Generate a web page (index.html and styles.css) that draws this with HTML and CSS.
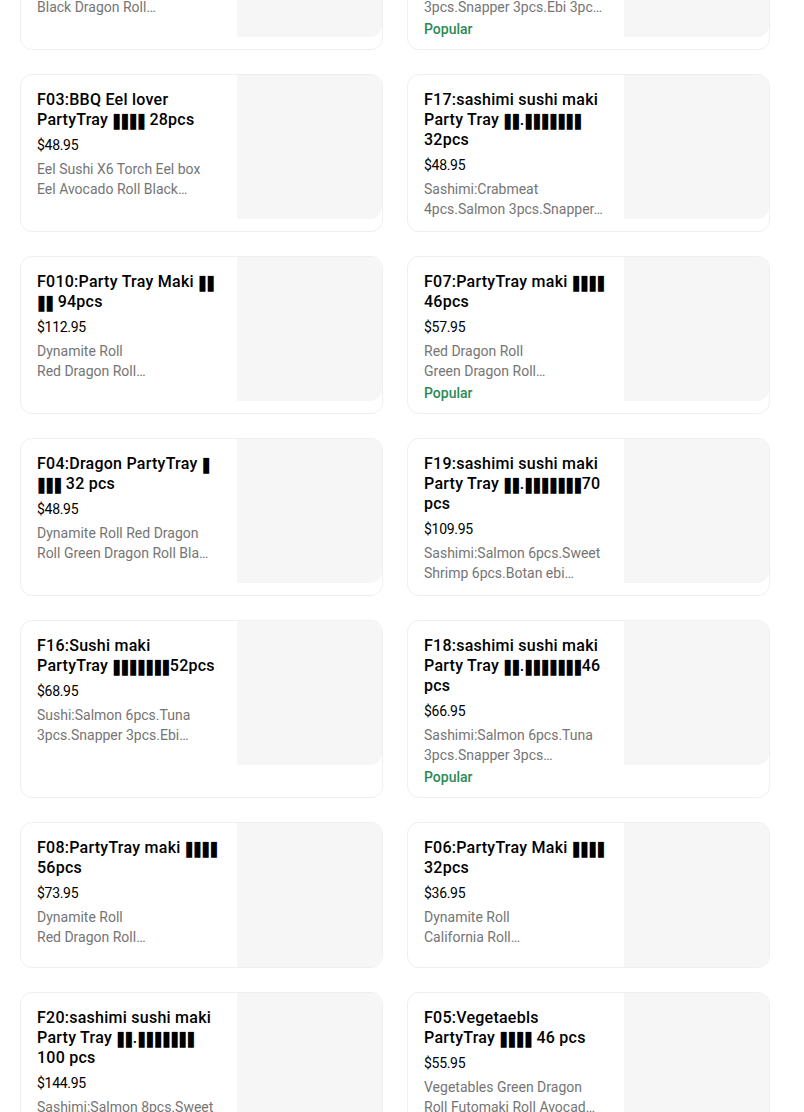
FILE: index.html
```html
<!DOCTYPE html>
<html lang="en">
<head>
<meta charset="utf-8">
<title>Party Trays</title>
<link rel="stylesheet" href="styles.css">
</head>
<body>
<main class="menu">
  <div class="card">
    <div class="info">
      <h3 class="title"><span class="ln">F02:Dragon lover PartyTray</span><span class="ln"><span class="tofu">▮▮▮▮</span> 40pcs</span></h3>
      <div class="price">$52.95</div>
      <p class="desc"><span class="ln">Red Dragon Roll Green Dragon</span><span class="ln">Black Dragon Roll…</span></p>
    </div>
    <div class="photo"></div>
  </div>
  <div class="card">
    <div class="info">
      <h3 class="title"><span class="ln">F15:Sushi PartyTray</span><span class="ln"><span class="tofu">▮▮▮▮▮▮▮</span>30pcs</span></h3>
      <div class="price">$45.95</div>
      <p class="desc"><span class="ln">Sushi:Salmon 6pcs.Tuna</span><span class="ln">3pcs.Snapper 3pcs.Ebi 3pc…</span></p>
      <div class="tag">Popular</div>
    </div>
    <div class="photo"></div>
  </div>

  <div class="card">
    <div class="info">
      <h3 class="title"><span class="ln">F03:BBQ Eel lover</span><span class="ln">PartyTray <span class="tofu">▮▮▮▮</span> 28pcs</span></h3>
      <div class="price">$48.95</div>
      <p class="desc"><span class="ln">Eel Sushi X6 Torch Eel box</span><span class="ln">Eel Avocado Roll Black…</span></p>
    </div>
    <div class="photo"></div>
  </div>
  <div class="card">
    <div class="info">
      <h3 class="title"><span class="ln">F17:sashimi sushi maki</span><span class="ln">Party Tray <span class="tofu">▮▮</span>.<span class="tofu">▮▮▮▮▮▮▮</span></span><span class="ln">32pcs</span></h3>
      <div class="price">$48.95</div>
      <p class="desc"><span class="ln">Sashimi:Crabmeat</span><span class="ln">4pcs.Salmon 3pcs.Snapper…</span></p>
    </div>
    <div class="photo"></div>
  </div>

  <div class="card">
    <div class="info">
      <h3 class="title"><span class="ln">F010:Party Tray Maki <span class="tofu">▮▮</span></span><span class="ln"><span class="tofu">▮▮</span> 94pcs</span></h3>
      <div class="price">$112.95</div>
      <p class="desc"><span class="ln">Dynamite Roll</span><span class="ln">Red Dragon Roll…</span></p>
    </div>
    <div class="photo"></div>
  </div>
  <div class="card">
    <div class="info">
      <h3 class="title"><span class="ln">F07:PartyTray maki <span class="tofu">▮▮▮▮</span></span><span class="ln">46pcs</span></h3>
      <div class="price">$57.95</div>
      <p class="desc"><span class="ln">Red Dragon Roll</span><span class="ln">Green Dragon Roll…</span></p>
      <div class="tag">Popular</div>
    </div>
    <div class="photo"></div>
  </div>

  <div class="card">
    <div class="info">
      <h3 class="title"><span class="ln">F04:Dragon PartyTray <span class="tofu">▮</span></span><span class="ln"><span class="tofu">▮▮▮</span> 32 pcs</span></h3>
      <div class="price">$48.95</div>
      <p class="desc"><span class="ln">Dynamite Roll Red Dragon</span><span class="ln">Roll Green Dragon Roll Bla…</span></p>
    </div>
    <div class="photo"></div>
  </div>
  <div class="card">
    <div class="info">
      <h3 class="title"><span class="ln">F19:sashimi sushi maki</span><span class="ln">Party Tray <span class="tofu">▮▮</span>.<span class="tofu">▮▮▮▮▮▮▮</span>70</span><span class="ln">pcs</span></h3>
      <div class="price">$109.95</div>
      <p class="desc"><span class="ln">Sashimi:Salmon 6pcs.Sweet</span><span class="ln">Shrimp 6pcs.Botan ebi…</span></p>
    </div>
    <div class="photo"></div>
  </div>

  <div class="card">
    <div class="info">
      <h3 class="title"><span class="ln">F16:Sushi maki</span><span class="ln">PartyTray <span class="tofu">▮▮▮▮▮▮▮</span>52pcs</span></h3>
      <div class="price">$68.95</div>
      <p class="desc"><span class="ln">Sushi:Salmon 6pcs.Tuna</span><span class="ln">3pcs.Snapper 3pcs.Ebi…</span></p>
    </div>
    <div class="photo"></div>
  </div>
  <div class="card">
    <div class="info">
      <h3 class="title"><span class="ln">F18:sashimi sushi maki</span><span class="ln">Party Tray <span class="tofu">▮▮</span>.<span class="tofu">▮▮▮▮▮▮▮</span>46</span><span class="ln">pcs</span></h3>
      <div class="price">$66.95</div>
      <p class="desc"><span class="ln">Sashimi:Salmon 6pcs.Tuna</span><span class="ln">3pcs.Snapper 3pcs…</span></p>
      <div class="tag">Popular</div>
    </div>
    <div class="photo"></div>
  </div>

  <div class="card">
    <div class="info">
      <h3 class="title"><span class="ln">F08:PartyTray maki <span class="tofu">▮▮▮▮</span></span><span class="ln">56pcs</span></h3>
      <div class="price">$73.95</div>
      <p class="desc"><span class="ln">Dynamite Roll</span><span class="ln">Red Dragon Roll…</span></p>
    </div>
    <div class="photo"></div>
  </div>
  <div class="card">
    <div class="info">
      <h3 class="title"><span class="ln">F06:PartyTray Maki <span class="tofu">▮▮▮▮</span></span><span class="ln">32pcs</span></h3>
      <div class="price">$36.95</div>
      <p class="desc"><span class="ln">Dynamite Roll</span><span class="ln">California Roll…</span></p>
    </div>
    <div class="photo"></div>
  </div>

  <div class="card">
    <div class="info">
      <h3 class="title"><span class="ln">F20:sashimi sushi maki</span><span class="ln">Party Tray <span class="tofu">▮▮</span>.<span class="tofu">▮▮▮▮▮▮▮</span></span><span class="ln">100 pcs</span></h3>
      <div class="price">$144.95</div>
      <p class="desc"><span class="ln">Sashimi:Salmon 8pcs.Sweet</span><span class="ln">Shrimp 8pcs.Botan ebi…</span></p>
    </div>
    <div class="photo"></div>
  </div>
  <div class="card">
    <div class="info">
      <h3 class="title"><span class="ln">F05:Vegetaebls</span><span class="ln">PartyTray <span class="tofu">▮▮▮▮</span> 46 pcs</span></h3>
      <div class="price">$55.95</div>
      <p class="desc"><span class="ln">Vegetables Green Dragon</span><span class="ln">Roll Futomaki Roll Avocad…</span></p>
    </div>
    <div class="photo"></div>
  </div>
</main>
</body>
</html>
```

FILE: styles.css
```css
html, body {
  margin: 0;
  padding: 0;
  background: #ffffff;
}

body {
  font-family: Roboto, "Liberation Sans", Arial, sans-serif;
  color: #000000;
  overflow: hidden;
}

.menu {
  width: 750px;
  margin: -108px 0 0 20px;
  display: grid;
  grid-template-columns: 1fr 1fr;
  column-gap: 24px;
  row-gap: 24px;
}

.card {
  display: flex;
  align-items: flex-start;
  border: 1px solid #efefef;
  border-radius: 12px;
  overflow: hidden;
  background: #ffffff;
}

.info {
  flex: 1;
  min-width: 0;
  padding: 15px 16px 12px;
}

.title {
  margin: 0;
  font-size: 16px;
  line-height: 20px;
  font-weight: 500;
  letter-spacing: 0.25px;
  color: #000000;
}

.ln {
  display: block;
  white-space: nowrap;
}

.tofu {
  display: inline-block;
  font-family: "DejaVu Sans", sans-serif;
  font-weight: normal;
  letter-spacing: -0.6px;
  transform: translateY(0.5px) scaleY(1.3);
}

.price {
  margin-top: 5px;
  font-size: 14px;
  line-height: 20px;
  color: #000000;
  letter-spacing: -0.3px;
}

.desc {
  margin: 4px 0 0;
  font-size: 14px;
  line-height: 20px;
  color: #757575;
}

.tag {
  margin: 2px 0 -2px;
  font-size: 14px;
  line-height: 20px;
  font-weight: 500;
  color: #2b8a55;
}

.photo {
  flex: none;
  width: 145px;
  height: 144px;
  background: #f6f6f6;
  border-radius: 0 12px 12px 0;
}
```
